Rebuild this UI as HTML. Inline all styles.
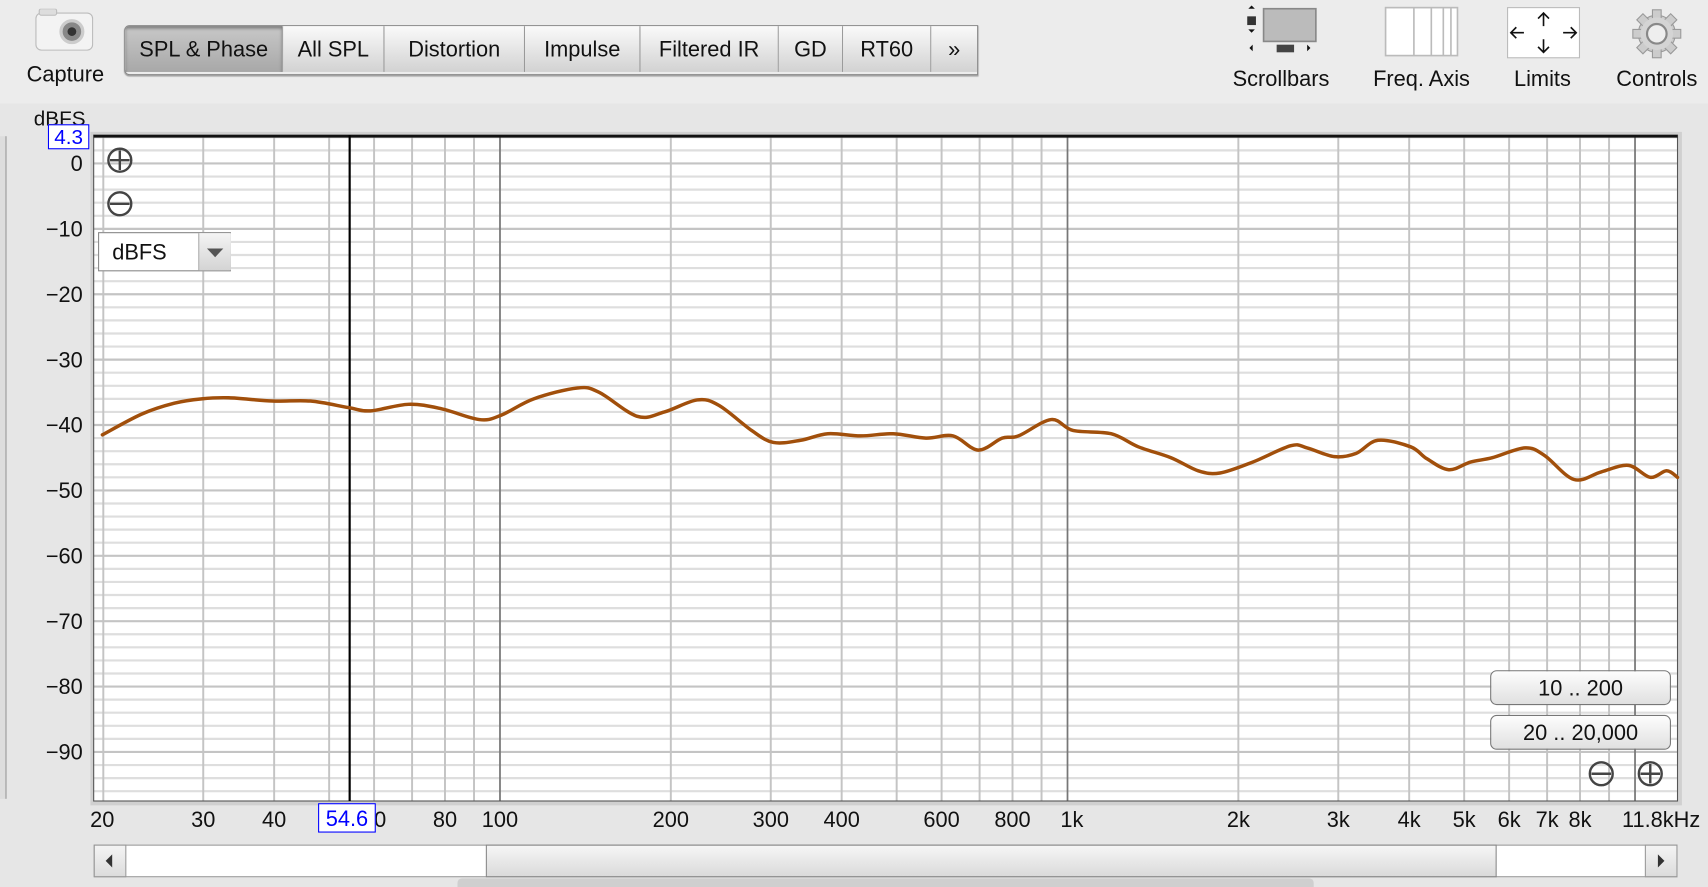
<!DOCTYPE html>
<html><head><meta charset="utf-8"><style>
html,body{margin:0;padding:0;width:1708px;height:886px;overflow:hidden;background:#e6e6e6;}
#w{position:absolute;left:0;top:0;width:1568px;height:813px;transform-origin:0 0;transform:scale(1.08929,1.08979);font-family:"Liberation Sans",sans-serif;color:#111;}
.a{position:absolute;}
.tab{position:absolute;top:24px;height:42px;line-height:44px;text-align:center;font-size:20px;border-right:1px solid #999;background:linear-gradient(#fafafa,#e2e2e2 60%,#d2d2d2);}
.lbl{position:absolute;font-size:20px;text-align:center;}
.btn{position:absolute;left:1368px;width:164px;height:30px;border:1px solid #777;border-radius:6px;background:linear-gradient(#fdfdfd,#e0e0e0);font-size:20px;text-align:center;line-height:32px;}
</style></head><body><div id="w">
<div class="a" style="left:0;top:0;width:1568px;height:95px;background:#ececec"></div>
<svg class="a" style="left:30px;top:8px" width="58" height="42"><rect x="3" y="4" width="52" height="34" rx="5" fill="#f3f3f3" stroke="#bbb"/><rect x="6" y="0" width="16" height="6" rx="2" fill="#ddd" stroke="#bbb"/><circle cx="36" cy="21" r="10" fill="#888" stroke="#ccc" stroke-width="3"/><circle cx="36" cy="21" r="4" fill="#333"/></svg>
<div class="lbl" style="left:15px;top:58px;width:90px">Capture</div>
<div class="a" style="left:114px;top:23px;width:782px;height:44px;border:1px solid #888;border-radius:5px 0 0 5px;overflow:hidden;box-shadow:0 1px 1px #999">
<div class="tab" style="left:0;width:144px;top:0;background:linear-gradient(#c8c8c8,#a8a8a8);box-shadow:inset 0 2px 3px #777">SPL &amp; Phase</div>
<div class="tab" style="left:145px;width:92px;top:0">All SPL</div>
<div class="tab" style="left:238px;width:128px;top:0">Distortion</div>
<div class="tab" style="left:367px;width:105px;top:0">Impulse</div>
<div class="tab" style="left:473px;width:126px;top:0">Filtered IR</div>
<div class="tab" style="left:600px;width:58px;top:0">GD</div>
<div class="tab" style="left:659px;width:80px;top:0">RT60</div>
<div class="tab" style="left:740px;width:42px;top:0;border:0">»</div>
</div>
<svg class="a" style="left:1140px;top:4px" width="74" height="50"><rect x="20" y="4" width="48" height="30" fill="#bbb" stroke="#888" stroke-width="1.5"/><path d="M6 4l3 -3 3 3z M6 23l3 3 3 -3z M10 37l-3 3 3 3z M60 37l3 3 -3 3z" fill="#111"/><rect x="5" y="11" width="8" height="8" fill="#333"/><rect x="32" y="37" width="16" height="7" fill="#444"/></svg>
<div class="lbl" style="left:1120px;top:62px;width:112px">Scrollbars</div>
<svg class="a" style="left:1271px;top:6px" width="70" height="48"><rect x="1" y="1" width="66" height="44" fill="#fff" stroke="#bbb" stroke-width="1.5"/><path d="M27 1v44M43 1v44M54 1v44M61 1v44" stroke="#bbb" stroke-width="1.5"/></svg>
<div class="lbl" style="left:1245px;top:62px;width:120px">Freq. Axis</div>
<svg class="a" style="left:1383px;top:6px" width="70" height="48"><rect x="1" y="1" width="66" height="46" fill="#fff" stroke="#bbb"/><path d="M34 6v12M29 11l5-5 5 5M34 30v12M29 37l5 5 5-5M4 24h12M9 19l-5 5 5 5M52 24h12M59 19l5 5-5 5" fill="none" stroke="#111" stroke-width="1.5"/></svg>
<div class="lbl" style="left:1370px;top:62px;width:92px">Limits</div>
<svg class="a" style="left:1498px;top:8px" width="46" height="46"><g transform="translate(23,23)"><circle r="17" fill="#ccc" stroke="#999"/><g fill="#ccc" stroke="#999"><rect x="-4" y="-22" width="8" height="8"/><rect x="-4" y="14" width="8" height="8"/><rect x="-22" y="-4" width="8" height="8"/><rect x="14" y="-4" width="8" height="8"/><rect x="-4" y="-22" width="8" height="8" transform="rotate(45)"/><rect x="-4" y="-22" width="8" height="8" transform="rotate(135)"/><rect x="-4" y="-22" width="8" height="8" transform="rotate(225)"/><rect x="-4" y="-22" width="8" height="8" transform="rotate(315)"/></g><circle r="15" fill="#d4d4d4"/><circle r="9" fill="#eee" stroke="#888" stroke-width="2"/></g></svg>
<div class="lbl" style="left:1470px;top:62px;width:102px">Controls</div>
<div class="a" style="left:0;top:125px;width:5px;height:608px;border-right:1px solid #999;background:#ddd"></div>
<div class="a" style="left:31px;top:99px;font-size:19px">dBFS</div>
<svg class="a" style="left:0;top:0" width="1568" height="813">
<rect x="83" y="121" width="1461" height="618" fill="#d0d0d0"/>
<rect x="86" y="124" width="1454" height="611" fill="#fff"/>
<g id="g"></g>
<rect x="86" y="124" width="1454" height="611" fill="none" stroke="#555" stroke-width="1"/>
<line x1="86" y1="125" x2="1540" y2="125" stroke="#111" stroke-width="2.5"/>
<line x1="321" y1="124" x2="321" y2="735" stroke="#000" stroke-width="2"/>
<path id="c" fill="none" stroke="#a14f0b" stroke-width="3.2" stroke-linejoin="round" stroke-linecap="round"/>
</svg>
<div class="a" style="left:44px;top:114px;width:36px;height:21px;border:1.5px solid #00f;background:#fff;color:#00f;font-size:19px;line-height:23px;text-align:center">4.3</div>
<div id="yl"></div>
<div id="xl"></div>
<div class="a" style="left:292px;top:737px;width:51px;height:25px;border:1.5px solid #00f;background:#fff;color:#00f;font-size:20px;line-height:28px;text-align:center">54.6</div>
<svg class="a" style="left:96px;top:134px" width="30" height="68"><g fill="none" stroke="#444" stroke-width="2.2"><circle cx="14" cy="13" r="10.5"/><path d="M5 13h18M14 4v18"/><circle cx="14" cy="53" r="10.5"/><path d="M5 53h18"/></g></svg>
<div class="a" style="left:90px;top:213px;width:120px;height:34px;border:1.5px solid #888;background:#fff;font-size:20px;line-height:36px"><span style="padding-left:12px">dBFS</span><div class="a" style="left:91px;top:0;width:29px;height:34px;border-left:1px solid #aaa;background:linear-gradient(#f4f4f4,#d4d4d4)"><svg width="29" height="34"><path d="M7 14h15l-7.5 8z" fill="#555"/></svg></div></div>
<div class="btn" style="top:615px">10 .. 200</div>
<div class="btn" style="top:656px">20 .. 20,000</div>
<svg class="a" style="left:1456px;top:696px" width="74" height="30"><g fill="none" stroke="#444" stroke-width="2.2"><circle cx="14" cy="14" r="10.5"/><path d="M5 14h18"/><circle cx="59" cy="14" r="10.5"/><path d="M50 14h18M59 5v18"/></g></svg>
<div class="a" style="left:86px;top:775px;width:1452px;height:28px;border:1px solid #999;background:#fff"></div>
<div class="a" style="left:86px;top:775px;width:28px;height:28px;border:1px solid #999;background:linear-gradient(#f4f4f4,#dcdcdc)"><svg width="28" height="28"><path d="M16 8v12l-6-6z" fill="#333"/></svg></div>
<div class="a" style="left:446px;top:775px;width:926px;height:28px;border:1px solid #888;background:linear-gradient(#f6f6f6,#dadada)"></div>
<div class="a" style="left:1510px;top:775px;width:28px;height:28px;border:1px solid #999;background:linear-gradient(#f4f4f4,#dcdcdc)"><svg width="28" height="28"><path d="M11 8v12l6-6z" fill="#333"/></svg></div>
<div class="a" style="left:420px;top:806px;width:786px;height:8px;background:#cfcfcf;border-radius:4px 4px 0 0"></div>
</div>
<script>
var NS="http://www.w3.org/2000/svg",g=document.getElementById('g');
function X(f){return 459+521*Math.log10(f/100);}
function Y(d){return 150-6*d;}
function ln(x1,y1,x2,y2,c,w){var l=document.createElementNS(NS,'line');l.setAttribute('x1',x1);l.setAttribute('y1',y1);l.setAttribute('x2',x2);l.setAttribute('y2',y2);l.setAttribute('stroke',c);l.setAttribute('stroke-width',w);g.appendChild(l);}
for(var d=4;d>=-96;d-=2){var y=Y(d);ln(86,y,1540,y,d%10==0?'#c4c4c4':'#dedede',2);}
var fs=[];[10,100,1000,10000].forEach(function(b){for(var k=1;k<10;k++)fs.push(b*k);});
fs.forEach(function(f){var x=X(f);if(x<87||x>1539)return;var dec=(f==100||f==1000||f==10000);ln(x,124,x,735,dec?'#777':'#c4c4c4',dec?1.6:1.8);});
var yl=document.getElementById('yl'),h='';
for(var d=0;d>=-90;d-=10){h+='<div class="a" style="left:20px;width:56px;text-align:right;top:'+(Y(d)-10)+'px;font-size:20px">'+(d==0?'0':'\u2212'+(-d))+'</div>';}
yl.innerHTML=h;
var xs=[[20,'20'],[30,'30'],[40,'40'],[60,'60'],[80,'80'],[100,'100'],[200,'200'],[300,'300'],[400,'400'],[600,'600'],[800,'800'],[1000,'1k'],[2000,'2k'],[3000,'3k'],[4000,'4k'],[5000,'5k'],[6000,'6k'],[7000,'7k'],[8000,'8k']];
h='';xs.forEach(function(a){var x=X(a[0]);if(a[1]=='1k')x+=4;if(a[1]=='20')x-=1;h+='<div class="a" style="left:'+(x-30)+'px;width:60px;text-align:center;top:742px;font-size:20px">'+a[1]+'</div>';});
h+='<div class="a" style="left:1489px;top:742px;font-size:20px">11.8kHz</div>';
document.getElementById('xl').innerHTML=h;
var p=[[94,399],[130,380],[160,370],[185,366],[210,365],[250,368],[285,368],[320,374],[340,377],[375,371],[405,375],[440,385],[460,381],[490,366],[530,356],[550,360],[585,382],[610,378],[640,367],[660,372],[690,395],[710,406],[735,404],[760,398],[790,400],[820,398],[850,402],[875,400],[898,413],[920,402],[935,400],[965,385],[985,395],[1020,398],[1045,410],[1075,420],[1100,432],[1120,434],[1150,424],[1185,409],[1200,411],[1225,419],[1245,416],[1265,404],[1295,410],[1310,421],[1330,431],[1350,424],[1370,420],[1400,411],[1418,418],[1445,440],[1470,433],[1495,427],[1515,438],[1530,432],[1540,438]];
var s='M'+p[0][0]+' '+p[0][1];
for(var i=0;i<p.length-1;i++){var p0=p[i-1]||p[i],p1=p[i],p2=p[i+1],p3=p[i+2]||p2;
s+=' C'+(p1[0]+(p2[0]-p0[0])/6)+' '+(p1[1]+(p2[1]-p0[1])/6)+' '+(p2[0]-(p3[0]-p1[0])/6)+' '+(p2[1]-(p3[1]-p1[1])/6)+' '+p2[0]+' '+p2[1];}
document.getElementById('c').setAttribute('d',s);
</script>
</body></html>
